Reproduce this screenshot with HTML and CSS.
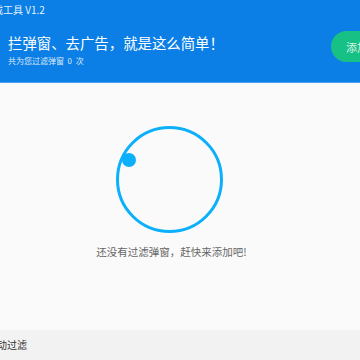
FILE: index.html
```html
<!DOCTYPE html>
<html lang="zh-CN">
<head>
    <meta charset="UTF-8">
    <meta name="viewport" content="width=device-width, initial-scale=1.0">
    <title>广告拦截工具 V1.2</title>
    <link rel="stylesheet" href="styles.css">
</head>
<body>
    <div class="app">
        <div class="header">
            <div class="titlebar">广告拦截工具 V1.2</div>
            <div class="hero">
                <div class="hero-text">
                    <h1 class="slogan">拦弹窗、去广告，就是这么简单！</h1>
                    <div class="count">共为您过滤弹窗 &nbsp;<span id="count">0</span>&nbsp; 次</div>
                </div>
                <button class="add-btn">添加弹窗</button>
            </div>
        </div>
        <div class="main">
            <div class="ring">
                <span class="ring-dot"></span>
            </div>
            <div class="empty-tip">还没有过滤弹窗，赶快来添加吧!</div>
        </div>
        <div class="footer">
            <label class="auto">开启自动过滤</label>
        </div>
    </div>
</body>
</html>
```

FILE: styles.css
```css
:root {
    --blue: #0b7fe6;
    --blue-line: #4aa0ef;
    --green: #17c185;
    --ring: #0cb0fa;
    --bg: #fafafa;
    --footer-bg: #f2f2f2;
}
html, body {
    margin: 0;
    padding: 0;
    overflow: hidden;
}
body {
    font-family: "Noto Sans CJK SC", "Noto Sans", sans-serif;
    background: var(--bg);
}
.app {
    width: 360px;
    height: 360px;
    display: flex;
    flex-direction: column;
}
.header {
    height: 82px;
    background: var(--blue);
    border-bottom: 1px solid var(--blue-line);
    color: #fff;
    flex-shrink: 0;
}
.titlebar {
    height: 20px;
    line-height: 20px;
    font-size: 10px;
    margin-left: -37px;
    white-space: nowrap;
    color: rgba(255, 255, 255, 0.92);
}
.hero {
    display: flex;
    align-items: flex-start;
    padding: 13px 0 0 8px;
}
.hero-text {
    flex: 1;
}
.slogan {
    margin: 0;
    font-size: 14.4px;
    font-weight: normal;
    line-height: 20px;
    white-space: nowrap;
}
.count {
    margin-top: 2px;
    font-size: 8px;
    line-height: 12px;
    color: rgba(255, 255, 255, 0.85);
}
.add-btn {
    flex-shrink: 0;
    width: 80px;
    height: 31px;
    margin: -2px -51px 0 0;
    padding: 0 0 0 15px;
    text-align: left;
    border: none;
    border-radius: 16px;
    background: var(--green);
    color: rgba(255, 255, 255, 0.85);
    font-family: inherit;
    font-size: 11px;
    white-space: nowrap;
}
.main {
    flex: 1;
    display: flex;
    flex-direction: column;
    align-items: center;
    padding: 43px 21px 0 0;
}
.ring {
    position: relative;
    width: 101px;
    height: 101px;
    border: 3px solid var(--ring);
    border-radius: 50%;
}
.ring-dot {
    position: absolute;
    left: 3px;
    top: 24px;
    width: 14px;
    height: 14px;
    border-radius: 50%;
    background: var(--ring);
}
.empty-tip {
    margin-top: 12px;
    margin-left: 4px;
    font-size: 10.5px;
    line-height: 14px;
    color: #666;
}
.footer {
    height: 30px;
    background: var(--footer-bg);
    flex-shrink: 0;
}
.auto {
    display: block;
    margin-left: -33px;
    line-height: 30px;
    font-size: 10px;
    color: #333;
    white-space: nowrap;
}
```
